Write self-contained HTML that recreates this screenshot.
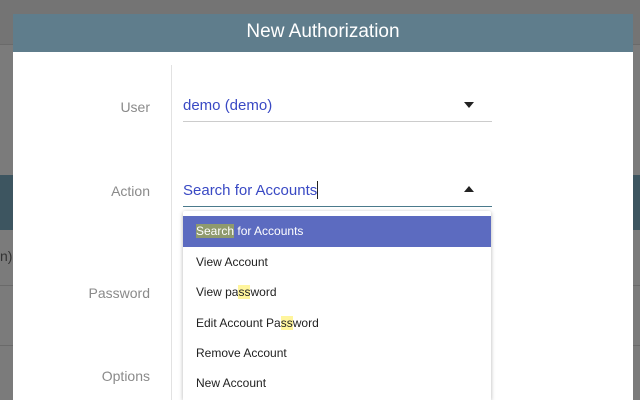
<!DOCTYPE html>
<html style="overflow:hidden;height:400px"><head><style>
body{margin:0;width:640px;height:400px;overflow:hidden;background:#7b7b7b;font-family:"Liberation Sans",sans-serif;position:relative}
.a{position:absolute}
.lbl{position:absolute;right:490px;color:#8a8a8a;font-size:14px}
.it{position:absolute;left:196px;font-size:12px;color:#222}
.hl{background:#fff59d}
</style></head><body>
<div class="a" style="left:0;top:0;width:640px;height:44px;background:#747474"></div>
<div class="a" style="left:0;top:44px;width:640px;height:1px;background:#6a6a6a"></div>
<div class="a" style="left:0;top:175px;width:640px;height:55px;background:#3d5560"></div>
<div class="a" style="left:0;top:285px;width:640px;height:1px;background:#6a6a6a"></div>
<div class="a" style="left:0;top:345px;width:640px;height:1px;background:#6a6a6a"></div>
<div class="a" style="left:0;top:248px;color:#333;font-size:14px">n)</div>
<div class="a" style="left:13px;top:14px;width:620px;height:38px;background:#5f7d8c;color:#fff;font-size:19px;text-align:center;line-height:36px">New Authorization</div>
<div class="a" style="left:13px;top:52px;width:620px;height:348px;background:#fff"></div>
<div class="a" style="left:171px;top:65px;width:1px;height:335px;background:#e2e2e2"></div>
<div class="lbl" style="top:99px">User</div>
<div class="lbl" style="top:183px">Action</div>
<div class="lbl" style="top:285px">Password</div>
<div class="lbl" style="top:368px">Options</div>
<div class="a" style="left:183px;top:97px;color:#3949c4;font-size:15px">demo (demo)</div>
<div class="a" style="left:464px;top:102px;width:0;height:0;border-left:5px solid transparent;border-right:5px solid transparent;border-top:6px solid #222"></div>
<div class="a" style="left:183px;top:121px;width:309px;height:1px;background:#ccc"></div>
<div class="a" style="left:183px;top:181px;color:#3949c4;font-size:15px">Search for Accounts<span style="display:inline-block;width:1px;height:18px;background:#222;vertical-align:-4px"></span></div>
<div class="a" style="left:464px;top:186px;width:0;height:0;border-left:5px solid transparent;border-right:5px solid transparent;border-bottom:6px solid #222"></div>
<div class="a" style="left:183px;top:206px;width:309px;height:1px;background:#4a7a8c"></div>
<div class="a" style="left:183px;top:211px;width:308px;height:189px;background:#fff;box-shadow:0 1px 4px rgba(0,0,0,.3);border-radius:2px 2px 0 0"></div>
<div class="a" style="left:183px;top:216px;width:308px;height:31px;background:#5c6bc0"></div>
<div class="it" style="top:224px;color:#fff"><span style="background:#8f9a6e">Search</span> for Accounts</div>
<div class="it" style="top:255px">View Account</div>
<div class="it" style="top:285px">View pa<span class="hl">ss</span>word</div>
<div class="it" style="top:316px">Edit Account Pa<span class="hl">ss</span>word</div>
<div class="it" style="top:346px">Remove Account</div>
<div class="it" style="top:376px">New Account</div>
</body></html>
